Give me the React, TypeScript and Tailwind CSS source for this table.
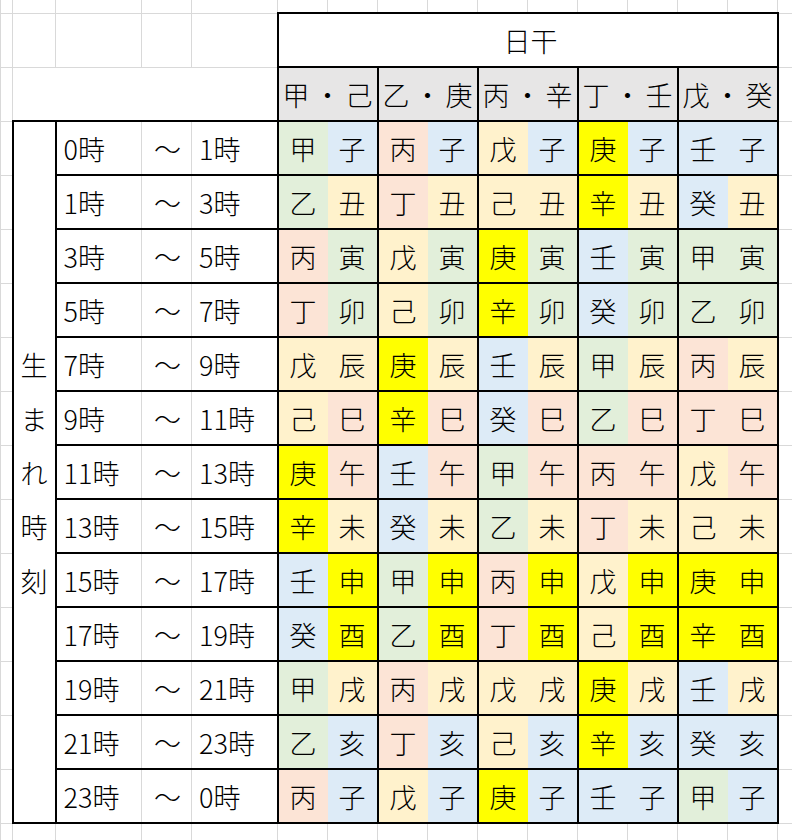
import React from 'react';

const STEMS = ['甲', '乙', '丙', '丁', '戊', '己', '庚', '辛', '壬', '癸'];
const BRANCHES = ['子', '丑', '寅', '卯', '辰', '巳', '午', '未', '申', '酉', '戌', '亥', '子'];
const TIMES: [number, number][] = [
  [0, 1], [1, 3], [3, 5], [5, 7], [7, 9], [9, 11], [11, 13],
  [13, 15], [15, 17], [17, 19], [19, 21], [21, 23], [23, 0],
];
const HEADERS = [
  ['甲', '己'],
  ['乙', '庚'],
  ['丙', '辛'],
  ['丁', '壬'],
  ['戊', '癸'],
];

// element colours (wood / fire / earth / metal / water)
const GREEN = 'bg-[#e2efda]';
const PEACH = 'bg-[#fce4d6]';
const CREAM = 'bg-[#fff2cc]';
const YELLOW = 'bg-[#ffff00]';
const BLUE = 'bg-[#ddebf7]';

const stemColor: Record<string, string> = {
  甲: GREEN, 乙: GREEN, 丙: PEACH, 丁: PEACH, 戊: CREAM,
  己: CREAM, 庚: YELLOW, 辛: YELLOW, 壬: BLUE, 癸: BLUE,
};
const branchColor: Record<string, string> = {
  子: BLUE, 亥: BLUE, 丑: CREAM, 辰: CREAM, 未: CREAM, 戌: CREAM,
  寅: GREEN, 卯: GREEN, 巳: PEACH, 午: PEACH, 申: YELLOW, 酉: YELLOW,
};

const grid = 'p-0 border border-[#d9d9d9]';
const WIDTHS = ['w-[12px]', 'w-[43px]', 'w-[86px]', 'w-[50px]', 'w-[86px]',
  'w-[50px]', 'w-[50px]', 'w-[50px]', 'w-[50px]', 'w-[50px]',
  'w-[50px]', 'w-[50px]', 'w-[50px]', 'w-[50px]', 'w-[50px]', 'w-[15px]'];

export default function App() {
  return (
    <div className="bg-white w-[792px] h-[840px] overflow-hidden font-['Noto_Sans_CJK_JP',sans-serif] font-light text-black">
      <table className="border-collapse table-fixed w-[792px] text-[27px] leading-none">
        <colgroup>
          {WIDTHS.map((w, i) => (
            <col key={i} className={w} />
          ))}
        </colgroup>
        <tbody>
          {/* top sliver row */}
          <tr className="h-[13px]">
            {WIDTHS.map((_, i) => (
              <td key={i} className={`${grid} border-t-0`} />
            ))}
          </tr>

          {/* 日干 */}
          <tr className="h-[54px]">
            <td className={grid} />
            <td className={grid} />
            <td className={grid} />
            <td className={grid} />
            <td className={grid} />
            <td colSpan={10} className="p-0 pl-[6px] border-2 border-black text-center">
              日干
            </td>
            <td className={grid} />
          </tr>

          {/* stem pair headers */}
          <tr className="h-[54px]">
            <td className={grid} />
            <td colSpan={4} className={grid} />
            {HEADERS.map(([a, b]) => (
              <td key={a} colSpan={2} className="p-0 border-2 border-black bg-[#e7e6e6]">
                <div className="flex justify-between px-[4px]">
                  <span>{a}</span>
                  <span>・</span>
                  <span>{b}</span>
                </div>
              </td>
            ))}
            <td className={grid} />
          </tr>

          {TIMES.map(([from, to], r) => (
            <tr key={r} className="h-[54px]">
              <td className={grid} />
              {r === 0 && (
                <td rowSpan={13} className="p-0 border-2 border-black">
                  <div className="flex flex-col items-center">
                    {['生', 'ま', 'れ', '時', '刻'].map((c) => (
                      <span key={c} className="h-[54px] flex items-center">
                        {c}
                      </span>
                    ))}
                  </div>
                </td>
              )}
              <td className="p-0 pl-[7px] border-y-2 border-l-2 border-black border-r border-r-[#d9d9d9]">
                {from}時
              </td>
              <td className="p-0 pl-[2px] text-center border-y-2 border-black border-x border-x-[#d9d9d9]">～</td>
              <td className="p-0 pl-[7px] border-y-2 border-r-2 border-black border-l border-l-[#d9d9d9]">
                {to}時
              </td>
              {[0, 2, 4, 6, 8].map((off) => {
                const s = STEMS[(off + r) % 10];
                const b = BRANCHES[r];
                return (
                  <React.Fragment key={off}>
                    <td className={`p-0 text-center border-y-2 border-l-2 border-r-0 border-black ${stemColor[s]}`}>
                      {s}
                    </td>
                    <td className={`p-0 text-center border-y-2 border-r-2 border-l-0 border-black ${branchColor[b]}`}>
                      {b}
                    </td>
                  </React.Fragment>
                );
              })}
              <td className={grid} />
            </tr>
          ))}

          {/* bottom sliver row */}
          <tr className="h-[17px]">
            {WIDTHS.map((_, i) => (
              <td key={i} className={`${grid} border-b-0`} />
            ))}
          </tr>
        </tbody>
      </table>
    </div>
  );
}
